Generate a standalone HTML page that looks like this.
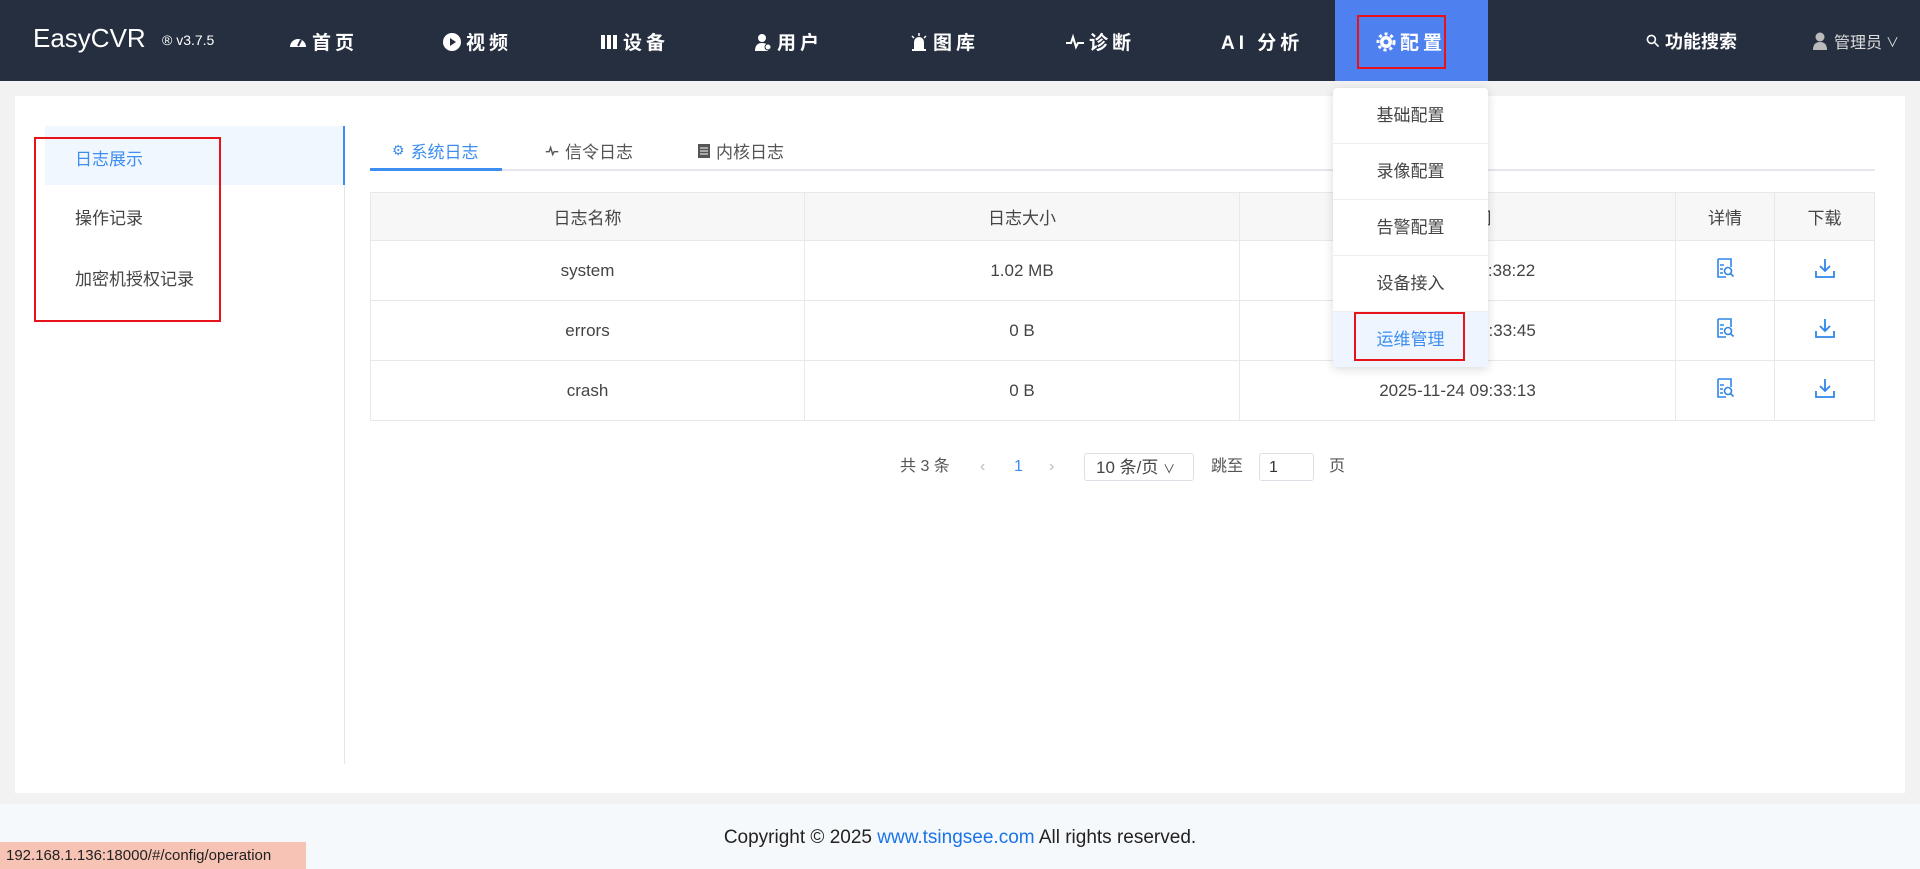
<!DOCTYPE html>
<html><head><meta charset="utf-8"><style>
*{margin:0;padding:0;box-sizing:border-box}
body{width:1920px;height:869px;overflow:hidden;background:#f2f2f2;font-family:"Liberation Sans","Noto Sans CJK SC",sans-serif;color:#333;position:relative}
.nav{position:absolute;left:0;top:0;width:1920px;height:81px;background:#262f3f;color:#fff}
.logo{position:absolute;left:33px;top:23px;font-size:26px;color:#fff}
.ver{position:absolute;left:162px;top:32px;font-size:14px}
.ni{position:absolute;top:28px;font-size:19px;font-weight:bold;letter-spacing:4px;display:flex;align-items:center;gap:4px}
.ni svg{width:20px;height:20px}
.act{position:absolute;left:1335px;top:0;width:153px;height:81px;background:#4e80f0}
.red{position:absolute;border:2px solid #e8121b}
.card{position:absolute;left:15px;top:96px;width:1890px;height:697px;background:#fff}
.foot{position:absolute;left:0;top:804px;width:1920px;height:65px;background:#f6f9fc;text-align:center;font-size:19px;line-height:32px;padding-top:18px;color:#222}
.foot a{color:#1a73e8;text-decoration:none}
.status{position:absolute;left:0;top:842px;width:306px;height:27px;background:#f6c3b5;font-size:15px;line-height:27px;padding-left:6px;color:#222}
.mi{position:absolute;left:75px;font-size:17px;color:#444}
.tab{position:absolute;top:138px;font-size:17px;color:#555;display:flex;align-items:center;gap:6px}
table{position:absolute;left:370px;top:192px;width:1505px;border-collapse:collapse;font-size:17px}
td,th{border:1px solid #e8e8e8;text-align:center;font-weight:normal;color:#444}
th{height:48px;background:#f7f7f7}
td{height:60px}
.dd{position:absolute;left:1333px;top:88px;width:155px;height:279px;background:#fff;box-shadow:0 2px 10px rgba(0,0,0,.15);border-radius:4px}
.dd div{height:56px;line-height:56px;text-align:center;font-size:17px;color:#444;border-bottom:1px solid #eee}
.pg{position:absolute;top:453px;font-size:16px;color:#555;line-height:27px}
</style></head><body>
<div class="nav">
<div class="logo">EasyCVR</div><div class="ver">® v3.7.5</div>
<div class="ni" style="left:288px"><svg viewBox="0 0 20 20"><path d="M2 15a8 8 0 1 1 16 0z" fill="#fff"/><path d="M10 14l3-6" stroke="#262f3f" stroke-width="2"/></svg>首页</div>
<div class="ni" style="left:442px"><svg viewBox="0 0 20 20"><circle cx="10" cy="10" r="9" fill="#fff"/><path d="M8 6l6 4-6 4z" fill="#262f3f"/></svg>视频</div>
<div class="ni" style="left:599px"><svg viewBox="0 0 20 20"><rect x="2" y="3" width="16" height="14" fill="#fff"/><path d="M7 3v14M13 3v14" stroke="#262f3f" stroke-width="2"/></svg>设备</div>
<div class="ni" style="left:753px"><svg viewBox="0 0 20 20"><circle cx="9" cy="6" r="4" fill="#fff"/><path d="M2 19c0-6 3-8 7-8s6 2 6 3v5z" fill="#fff"/><circle cx="15" cy="15" r="3" fill="#fff" stroke="#262f3f"/></svg>用户</div>
<div class="ni" style="left:909px"><svg viewBox="0 0 20 20"><path d="M5 17v-7a5 5 0 0 1 10 0v7z" fill="#fff"/><rect x="3" y="17" width="14" height="2" fill="#fff"/><path d="M10 1v3M3 4l2 2M17 4l-2 2" stroke="#fff" stroke-width="1.5"/></svg>图库</div>
<div class="ni" style="left:1065px"><svg viewBox="0 0 20 20"><path d="M1 11h5l2-6 3 10 2-4h6" stroke="#fff" stroke-width="2" fill="none"/></svg>诊断</div>
<div class="ni" style="left:1221px">AI 分析</div>
<div class="act"></div>
<div class="ni" style="left:1376px"><svg viewBox="0 0 20 20"><circle cx="10" cy="10" r="6" fill="#fff"/><circle cx="10" cy="10" r="8" fill="none" stroke="#fff" stroke-width="3" stroke-dasharray="3 3"/><circle cx="10" cy="10" r="2.5" fill="#4e80f0"/></svg>配置</div>
<div class="red" style="left:1357px;top:15px;width:89px;height:54px"></div>
<div class="ni" style="left:1645px;letter-spacing:0;font-size:18px"><svg viewBox="0 0 20 20" style="width:16px"><circle cx="8" cy="8" r="5" fill="none" stroke="#fff" stroke-width="2"/><path d="M12 12l5 5" stroke="#fff" stroke-width="2"/></svg>功能搜索</div>
<div class="ni" style="left:1810px;font-weight:normal;font-size:16px;letter-spacing:0;color:#ddd;top:29px"><svg viewBox="0 0 20 20"><circle cx="10" cy="6" r="4.5" fill="#bbb"/><path d="M3 19c0-6 3-8 7-8s7 2 7 8z" fill="#bbb"/></svg>管理员 <span style="font-size:13px">&#8744;</span></div>
</div>
<div class="card"></div>
<div style="position:absolute;left:45px;top:126px;width:299px;height:59px;background:#f0f7ff"></div>
<div style="position:absolute;left:344px;top:126px;width:1px;height:638px;background:#e6e6e6"></div>
<div style="position:absolute;left:343px;top:126px;width:2px;height:59px;background:#3d8ef0"></div>
<div class="mi" style="top:145px;color:#3d8ef0">日志展示</div>
<div class="mi" style="top:204px">操作记录</div>
<div class="mi" style="top:265px">加密机授权记录</div>
<div class="red" style="left:34px;top:137px;width:187px;height:185px"></div>
<div style="position:absolute;left:370px;top:169px;width:1505px;height:2px;background:#e4e7ed"></div>
<div style="position:absolute;left:370px;top:168px;width:132px;height:3px;background:#3d8ef0"></div>
<div class="tab" style="left:392px;color:#3d8ef0"><span style="font-size:14px">⚙</span>系统日志</div>
<div class="tab" style="left:545px"><svg width="14" height="14" viewBox="0 0 20 20"><path d="M1 11h5l2-6 3 10 2-4h6" stroke="#555" stroke-width="2" fill="none"/></svg>信令日志</div>
<div class="tab" style="left:698px"><svg width="12" height="14" viewBox="0 0 12 14"><rect width="12" height="14" fill="#555"/><path d="M2 4h8M2 7h8M2 10h8" stroke="#fff"/></svg>内核日志</div>
<table>
<tr><th style="width:434px">日志名称</th><th style="width:435px">日志大小</th><th style="width:436px">更新时间</th><th style="width:99px">详情</th><th>下载</th></tr>
<tr><td>system</td><td>1.02 MB</td><td>2025-11-24 11:38:22</td><td><svg width="20" height="22" viewBox="0 0 20 22"><path d="M3 2h13v8M3 2v18h8" stroke="#2f86e8" stroke-width="1.6" fill="none"/><path d="M5 8h4M5 12h3M5 16h3" stroke="#2f86e8" stroke-width="1.5"/><circle cx="13" cy="14" r="3.5" stroke="#2f86e8" stroke-width="1.6" fill="none"/><path d="M15.5 16.5l3 3" stroke="#2f86e8" stroke-width="1.6"/></svg></td><td><svg width="22" height="22" viewBox="0 0 22 22"><path d="M11 2v12M6 9l5 5 5-5" stroke="#2f86e8" stroke-width="1.8" fill="none"/><path d="M2 14v6h18v-6" stroke="#2f86e8" stroke-width="1.8" fill="none"/></svg></td></tr>
<tr><td>errors</td><td>0 B</td><td>2025-11-24 09:33:45</td><td><svg width="20" height="22" viewBox="0 0 20 22"><path d="M3 2h13v8M3 2v18h8" stroke="#2f86e8" stroke-width="1.6" fill="none"/><path d="M5 8h4M5 12h3M5 16h3" stroke="#2f86e8" stroke-width="1.5"/><circle cx="13" cy="14" r="3.5" stroke="#2f86e8" stroke-width="1.6" fill="none"/><path d="M15.5 16.5l3 3" stroke="#2f86e8" stroke-width="1.6"/></svg></td><td><svg width="22" height="22" viewBox="0 0 22 22"><path d="M11 2v12M6 9l5 5 5-5" stroke="#2f86e8" stroke-width="1.8" fill="none"/><path d="M2 14v6h18v-6" stroke="#2f86e8" stroke-width="1.8" fill="none"/></svg></td></tr>
<tr><td>crash</td><td>0 B</td><td>2025-11-24 09:33:13</td><td><svg width="20" height="22" viewBox="0 0 20 22"><path d="M3 2h13v8M3 2v18h8" stroke="#2f86e8" stroke-width="1.6" fill="none"/><path d="M5 8h4M5 12h3M5 16h3" stroke="#2f86e8" stroke-width="1.5"/><circle cx="13" cy="14" r="3.5" stroke="#2f86e8" stroke-width="1.6" fill="none"/><path d="M15.5 16.5l3 3" stroke="#2f86e8" stroke-width="1.6"/></svg></td><td><svg width="22" height="22" viewBox="0 0 22 22"><path d="M11 2v12M6 9l5 5 5-5" stroke="#2f86e8" stroke-width="1.8" fill="none"/><path d="M2 14v6h18v-6" stroke="#2f86e8" stroke-width="1.8" fill="none"/></svg></td></tr>
</table>
<div class="pg" style="left:900px">共 3 条</div>
<div class="pg" style="left:980px;color:#bbb">&lsaquo;</div>
<div class="pg" style="left:1014px;color:#3d8ef0">1</div>
<div class="pg" style="left:1049px;color:#bbb">&rsaquo;</div>
<div class="pg" style="left:1084px;width:110px;height:28px;border:1px solid #dcdfe6;border-radius:3px;padding-left:11px;font-size:17px;color:#444">10 条/页 <span style="font-size:12px">&#8744;</span></div>
<div class="pg" style="left:1211px">跳至</div>
<div class="pg" style="left:1259px;width:55px;height:28px;border:1px solid #dcdfe6;border-radius:3px;padding-left:9px;color:#333">1</div>
<div class="pg" style="left:1329px">页</div>
<div class="dd"><div>基础配置</div><div>录像配置</div><div>告警配置</div><div>设备接入</div><div style="background:#eef5ff;color:#3d8ef0;border:none;height:55px">运维管理</div></div>
<div class="red" style="left:1354px;top:312px;width:111px;height:49px"></div>
<div class="foot">Copyright © 2025 <a>www.tsingsee.com</a> All rights reserved.</div>
<div class="status">192.168.1.136:18000/#/config/operation</div>
</body></html>
